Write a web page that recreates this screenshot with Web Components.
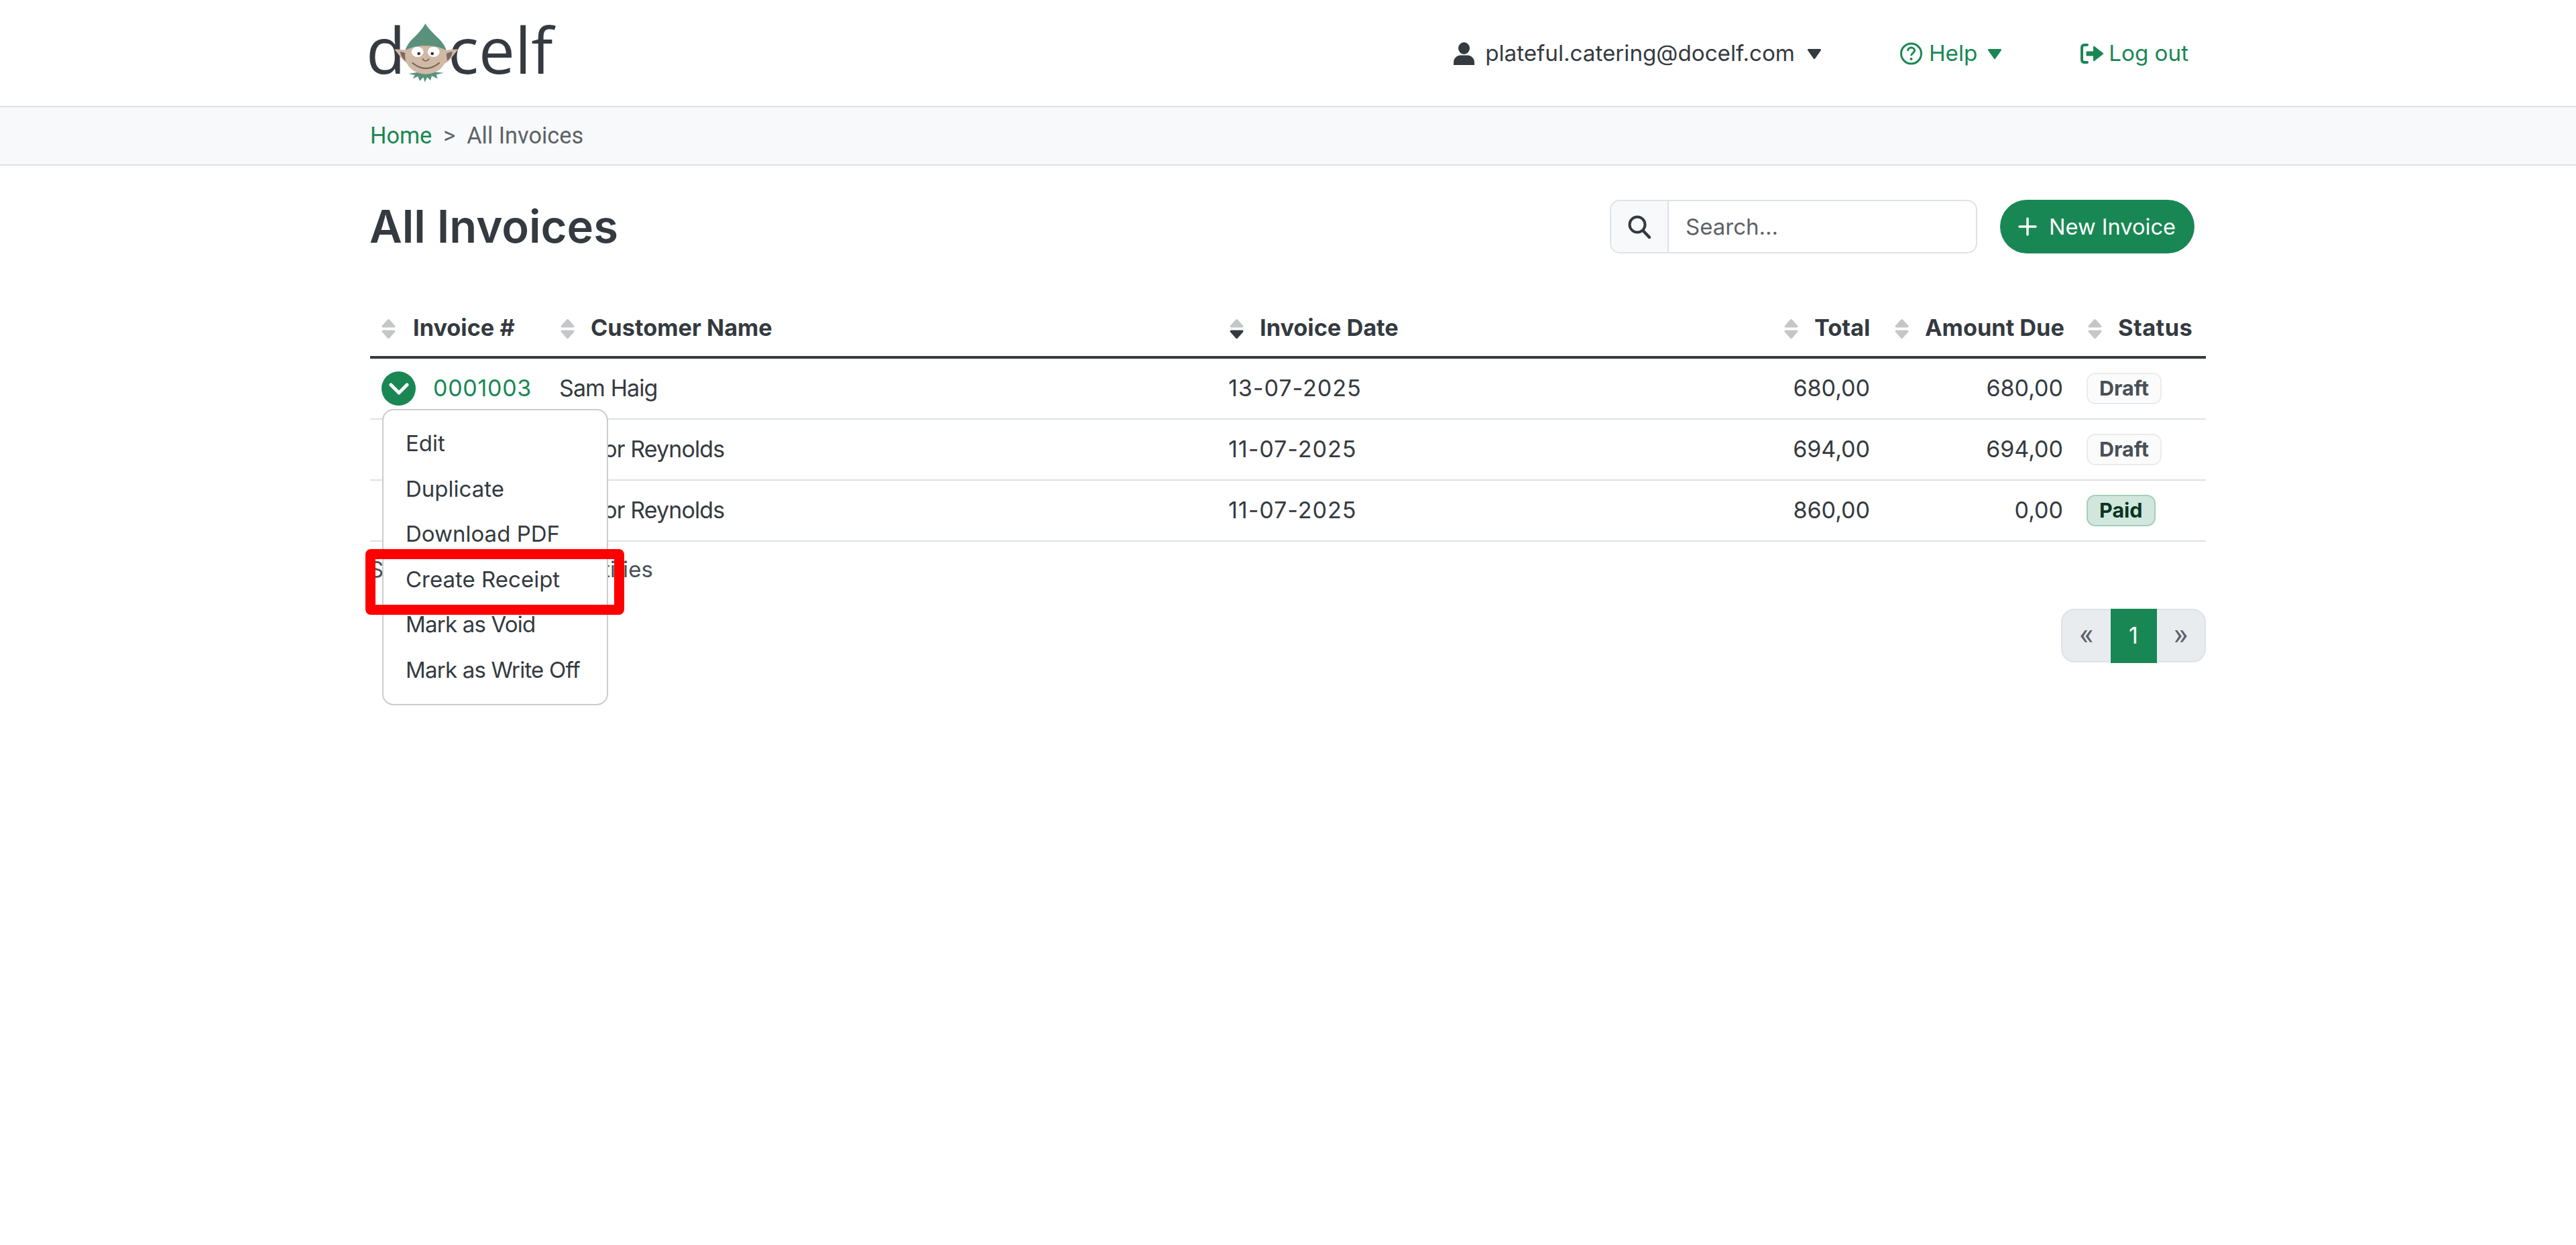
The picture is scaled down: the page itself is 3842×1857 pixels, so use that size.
<!DOCTYPE html>
<html lang="en"><head><meta charset="utf-8"><title>All Invoices</title>
<style>
html,body{margin:0;background:#fff;min-height:100%}
body{font-family:Inter,"Liberation Sans",sans-serif;font-size:34px;color:#343a40}
de-page{display:block}
</style></head><body>
<de-page></de-page>
<script>
const FONT='Inter,"Liberation Sans",sans-serif';
function def(name,css,html){
  class C extends HTMLElement{
    constructor(){super();const s=this.attachShadow({mode:'open'});
      s.innerHTML=`<style>${css}</style>`+(typeof html==='function'?html(this):html);}
  }
  customElements.define(name,C);
}

def('de-logo',`
:host{display:block;position:relative;width:290px;height:100px}
.t{position:absolute;top:-21px;font:400 96px/134px "Open Sans",sans-serif;color:#343a40}
.d{left:-4px}.c{left:118px}
svg{position:absolute;left:-10px;top:-7px}
`,`<span class="t d">d</span><span class="t c">celf</span>
<svg width="300" height="120" viewBox="0 0 900 360">
<path d="M208 270L236 276 228 292 250 282 258 302 274 286 281 308 292 286 306 300 312 280 338 292 332 274 366 266 285 258Z" fill="#5a917d"/>
<path d="M145 161C170 160 192 162 212 170L206 224C184 216 170 190 145 161Z" fill="#d0b9a5"/>
<path d="M430 161C405 160 383 162 363 170L369 224C391 216 405 190 430 161Z" fill="#d0b9a5"/>
<path d="M170 172C182 172 192 176 198 182L194 212C182 204 174 190 170 172Z" fill="#7a6a5e"/>
<path d="M405 172C393 172 383 176 377 182L381 212C393 204 401 190 405 172Z" fill="#7a6a5e"/>
<ellipse cx="285" cy="190" rx="93" ry="82" fill="#d0b9a5"/>
<path d="M283 45C300 75 332 100 352 122 364 136 373 150 377 166 350 150 320 145 285 145 250 145 220 150 193 166 198 148 207 135 218 122 240 100 268 75 283 45Z" fill="#5a917d"/>
<ellipse cx="248" cy="172" rx="27" ry="23" fill="#fff"/><ellipse cx="320" cy="172" rx="27" ry="23" fill="#fff"/>
<circle cx="254" cy="180" r="7" fill="#352e2a"/><circle cx="314" cy="180" r="7" fill="#352e2a"/>
<path d="M271 204Q285 222 299 204" fill="none" stroke="#6f5f55" stroke-width="5" stroke-linecap="round"/>
<path d="M226 222Q285 270 345 222" fill="none" stroke="#6f5f55" stroke-width="6" stroke-linecap="round"/>
</svg>`);

def('de-header',`
:host{display:block;height:158px;border-bottom:2px solid #dee2e6}
.in{margin-left:550px;width:2740px;height:158px;display:flex;align-items:center}
de-logo{margin-top:-4px}
nav{margin-left:auto;margin-right:26px;display:flex;align-items:center;margin-top:2px}
.i{display:flex;align-items:center;font:400 33.200px/1.2 ${FONT}}
.g{color:#198754}
.u svg.ic{margin-right:16px}.u svg.car{margin-left:18px}
.h{margin-left:117px}.h svg.ic{margin-right:10px}.h svg.car{margin-left:15px}
.l{margin-left:117px}.l svg.ic{margin-right:7px}
svg{display:block}
`,`<div class="in"><de-logo></de-logo><nav>
<div class="i u"><svg class="ic" width="31" height="34" viewBox="0 0 31 34"><ellipse cx="15.500" cy="9" rx="8.500" ry="9" fill="#343a40"/><path d="M0 34V30C0 24 5 19.500 10 19.500H21C26 19.500 31 24 31 30V34Z" fill="#343a40"/></svg>plateful.catering@docelf.com<svg class="car" width="22" height="15" viewBox="0 0 22 15"><path d="M2.500 1.500H19.500L11 13.500Z" fill="#343a40" stroke="#343a40" stroke-width="3" stroke-linejoin="round"/></svg></div>
<div class="i h g"><svg class="ic" width="33" height="34" viewBox="0 0 33 34"><circle cx="16.500" cy="17" r="15" fill="none" stroke="#198754" stroke-width="3"/><path d="M11.500 13c0-3 2.200-5 5-5s5 2 5 4.600c0 3.400-5 3.800-5 7.400" fill="none" stroke="#198754" stroke-width="3"/><circle cx="16.500" cy="25" r="2" fill="#198754"/></svg>Help<svg class="car" width="22" height="15" viewBox="0 0 22 15"><path d="M2.500 1.500H19.500L11 13.500Z" fill="#198754" stroke="#198754" stroke-width="3" stroke-linejoin="round"/></svg></div>
<div class="i l g"><svg class="ic" width="35" height="30" viewBox="0 0 35 30"><path d="M10 2H6C3.500 2 2 3.500 2 6V24C2 26.500 3.500 28 6 28H10" fill="none" stroke="#198754" stroke-width="4" stroke-linecap="round"/><path d="M10 11.500H19V5C19 4 20 3.500 21 4.200L33.500 14C34.500 14.700 34.500 15.300 33.500 16L21 25.800C20 26.500 19 26 19 25V18.500H10C9 18.500 8.500 18 8.500 17V13C8.500 12 9 11.500 10 11.500Z" fill="#198754"/></svg>Log out</div>
</nav></div>`);

def('de-breadcrumb',`
:host{display:block;height:85px;background:#f8f9fa;border-bottom:2px solid #dee2e6}
.in{margin-left:552px;height:85px;display:flex;align-items:center;font:400 34.300px/1.2 Roboto,${FONT};color:#5c6268}
a{color:#198754;text-decoration:none}
span.s{margin:0 17px}
`,`<div class="in"><a href="#">Home</a><span class="s">&gt;</span><span>All Invoices</span></div>`);

def('de-search',`
:host{display:flex;width:548px;height:80px;box-sizing:border-box;border:2.500px solid #dee2e6;border-radius:15px;background:#fff;overflow:hidden}
.ic{width:84px;background:#f8f9fa;border-right:2px solid #dee2e6;display:flex;align-items:center;justify-content:center}
input{flex:1;border:0;outline:0;background:transparent;padding:0 0 0 25px;font:400 33px ${FONT};color:#343a40;min-width:0}
input::placeholder{color:#5c6268;opacity:1}
`,`<div class="ic"><svg width="34" height="35" viewBox="0 0 34 35"><circle cx="14" cy="14" r="11.500" fill="none" stroke="#343a40" stroke-width="4"/><path d="M22.500 23L32 33" stroke="#343a40" stroke-width="4.500" stroke-linecap="round"/></svg></div><input placeholder="Search...">`);

def('de-button',`
:host{display:inline-flex;align-items:center;height:80px;width:290px;box-sizing:border-box;padding-left:27px;border-radius:40px;background:#198754;color:#fff;font:400 32.600px ${FONT};white-space:nowrap}
svg{margin-right:18px;display:block}
`,`<svg width="28" height="28" viewBox="0 0 28 28"><path d="M14 2V26M2 14H26" stroke="#fff" stroke-width="3.500" stroke-linecap="round"/></svg><slot></slot>`);

def('de-titlebar',`
:host{display:flex;align-items:center;height:80px}
h1{margin:0 0 0 -1px;font:600 67px/80px ${FONT};color:#343a40}
.r{margin-left:auto;display:flex;gap:34px;margin-right:17px}
`,`<h1>All Invoices</h1><div class="r"><de-search></de-search><de-button>New Invoice</de-button></div>`);

def('de-sort',`
:host{display:inline-block;width:23px;height:31px;flex:none}
svg{display:block}
`,h=>{const a=h.hasAttribute('active')?'#343a40':'#c4c6c8';return `<svg width="23" height="31" viewBox="0 0 23 31"><path d="M10 1.800 2.200 10.500C1 12 1.500 13.500 3.500 13.500H19.500C21.500 13.500 22 12 20.800 10.500L13 1.800C12 .6 11 .6 10 1.800Z" fill="#c4c6c8"/><path d="M10 29.200 2.200 20.500C1 19 1.500 17.500 3.500 17.500H19.500C21.500 17.500 22 19 20.800 20.500L13 29.200C12 30.400 11 30.400 10 29.200Z" fill="${a}"/></svg>`});

def('de-badge',`
:host{display:inline-block;box-sizing:border-box;height:47px;padding:0 17px;border-radius:13px;border:2.500px solid #e9ecef;background:#fbfbfc;color:#495057;font:700 30.500px/42px ${FONT};vertical-align:middle}
:host([paid]){background:#d1e7dd;border-color:#a3cfbb;color:#0a3622}
`,`<slot></slot>`);

def('de-toggle',`
:host{display:inline-flex;width:51px;height:51px;border-radius:50%;background:#198754;align-items:center;justify-content:center;flex:none}
`,`<svg width="30" height="20" viewBox="0 0 30 20"><path d="M3 4L15 16 27 4" fill="none" stroke="#fff" stroke-width="5" stroke-linecap="round" stroke-linejoin="round"/></svg>`);

def('de-menu',`
:host{position:absolute;left:18px;top:75px;width:337px;height:442px;box-sizing:border-box;padding:16px 0;background:#fff;border:2.500px solid #ccc;border-radius:17px;z-index:2;font:400 33px/67.600px ${FONT};color:#343a40}
div{padding-left:33px;white-space:nowrap}
.m{letter-spacing:-.8px}
`,`<div>Edit</div><div>Duplicate</div><div>Download PDF</div><div>Create Receipt</div><div class="m">Mark as Void</div><div class="m">Mark as Write Off</div>`);

def('de-table',`
:host{display:block;margin-top:72px;font:400 34px/1.2 ${FONT};color:#343a40}
table{border-collapse:separate;border-spacing:0;table-layout:fixed;width:2738px}
th{height:81px;border-bottom:4px solid #343a40;padding:0 0 0 15px;text-align:left;font-weight:700;box-sizing:content-box;font-size:34.300px;white-space:nowrap}
th:first-child{padding-left:16px}
th>div{display:flex;align-items:center;gap:23px;position:relative;top:-2px}
th de-sort{position:relative;top:2px}
th:first-child>div{gap:25px}
th:last-child>div{letter-spacing:.5px}
td{height:89px;border-bottom:2px solid #dee2e6;padding:0 0 0 14px;white-space:nowrap;box-sizing:content-box}
.r{text-align:right;padding-right:21px}
.n{letter-spacing:-.9px}
.dt{letter-spacing:1px}
td.first{position:relative;padding-left:17px}
td.first>div{display:flex;align-items:center;gap:26px}
a{color:#198754;text-decoration:none;letter-spacing:.7px}
`,`<table><colgroup><col style="width:268px"><col style="width:998px"><col style="width:827px"><col style="width:165px"><col style="width:288px"><col style="width:192px"></colgroup>
<thead><tr>
<th><div><de-sort></de-sort>Invoice #</div></th>
<th><div><de-sort></de-sort>Customer Name</div></th>
<th><div><de-sort active></de-sort>Invoice Date</div></th>
<th><div><de-sort></de-sort>Total</div></th>
<th><div><de-sort></de-sort>Amount Due</div></th>
<th><div><de-sort></de-sort>Status</div></th></tr></thead>
<tbody>
<tr><td class="first"><div><de-toggle></de-toggle><a href="#">0001003</a></div><de-menu></de-menu></td><td class="n">Sam Haig</td><td class="dt">13-07-2025</td><td class="r">680,00</td><td class="r">680,00</td><td><de-badge>Draft</de-badge></td></tr>
<tr><td></td><td class="n">Trevor Reynolds</td><td class="dt">11-07-2025</td><td class="r">694,00</td><td class="r">694,00</td><td><de-badge>Draft</de-badge></td></tr>
<tr><td></td><td class="n">Trevor Reynolds</td><td class="dt">11-07-2025</td><td class="r">860,00</td><td class="r">0,00</td><td><de-badge paid>Paid</de-badge></td></tr>
</tbody></table>`);

def('de-pagination',`
:host{display:flex;width:216px;height:80px;box-sizing:border-box;border:2.500px solid #dee2e6;border-radius:20px;background:#e9ecef;margin:32px 0 0 auto;color:#5c6268;font:400 46px/70px Roboto,${FONT};text-align:center}
span{flex:1}
.a{flex:none;width:69px;background:#198754;color:#fff;margin:-2.500px 0;font:400 34px/80px ${FONT}}
`,`<span>«</span><span class="a">1</span><span>»</span>`);

def('de-page',`
:host{display:block}
main{margin-left:552px;width:2738px;position:relative;padding-top:51px;min-height:1400px}
.info{padding-top:14px;font:400 33px/54px ${FONT};color:#495057;margin-left:-1px;letter-spacing:.12px}
.mark{position:absolute;left:-7px;top:572px;width:386px;height:98px;box-sizing:border-box;border:15px solid #ff0000;border-radius:8px;z-index:3;pointer-events:none}
`,`<de-header></de-header><de-breadcrumb></de-breadcrumb><main>
<de-titlebar></de-titlebar><de-table></de-table>
<div class="info">Showing 1 to 3 of 3 entities</div>
<de-pagination></de-pagination>
<div class="mark"></div></main>`);
</script></body></html>
